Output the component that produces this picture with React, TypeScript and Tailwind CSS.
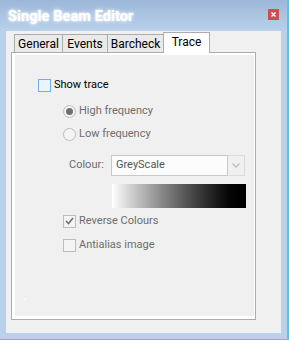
import React from "react";

function Radio({ checked }: { checked?: boolean }) {
  return (
    <div className="w-[13px] h-[13px] rounded-full border border-[#bcbcbc] bg-[#f4f4f4] flex items-center justify-center shrink-0">
      {checked && <div className="w-[7px] h-[7px] rounded-full bg-[#707070]" />}
    </div>
  );
}

function DisabledCheck({ checked }: { checked?: boolean }) {
  return (
    <div className="w-[13px] h-[13px] border border-[#bcbcbc] bg-[#f4f4f4] flex items-center justify-center shrink-0">
      {checked && (
        <svg width="9" height="8" viewBox="0 0 9 8">
          <path d="M1 4 L3.5 6.5 L8 1" stroke="#707070" strokeWidth="1.6" fill="none" />
        </svg>
      )}
    </div>
  );
}

export default function App() {
  const tabs = [
    { label: "General", w: "w-[49px]" },
    { label: "Events", w: "w-[46px]" },
    { label: "Barcheck", w: "w-[57px]" },
  ];
  return (
    <div className="w-[289px] h-[340px] flex flex-col bg-[#b9d1ea] border-r-2 border-b border-[#4fc6ea] overflow-hidden font-['Roboto','Noto_Sans',sans-serif] text-[11px]">
      {/* title bar */}
      <div className="h-[31px] flex items-start justify-between bg-gradient-to-b from-[#9db7d9] to-[#b9d1ea] pl-[8px] pr-[8px]">
        <div
          className="mt-[8px] text-white font-bold text-[14.5px] leading-[18px] tracking-[0.1px]"
          style={{ textShadow: "0 0 4px rgba(255,255,255,0.9), 0 0 2px rgba(255,255,255,0.8)" }}
        >
          Single Beam Editor
        </div>
        <div className="mt-[9px] w-[11px] h-[11px] bg-[#c75050] flex items-center justify-center">
          <svg width="5" height="5" viewBox="0 0 5 5">
            <path d="M0.5 0.5 L4.5 4.5 M4.5 0.5 L0.5 4.5" stroke="#fff" strokeWidth="1.4" />
          </svg>
        </div>
      </div>
      {/* client row */}
      <div className="flex h-[302px]">
        <div className="w-[6px] shrink-0" />
        <div className="w-[275px] bg-[#f0f0f0] pt-[1px] pl-[5px] flex flex-col">
          {/* tab strip */}
          <div className="h-[20px] flex items-end pl-[3px]">
            {tabs.map((t, i) => (
              <div
                key={t.label}
                className={`${t.w} ${i > 0 ? "-ml-px" : ""} h-[18px] border border-b-0 border-[#acacac] bg-[#eaeaea] flex items-center justify-center text-black text-[12px] leading-none`}
              >
                {t.label}
              </div>
            ))}
            <div className="w-[47px] -ml-px h-[21px] -mb-px relative z-10 border border-b-0 border-[#acacac] bg-white flex items-start justify-center pt-[3px] text-black text-[12px] leading-none">
              Trace
            </div>
          </div>
          {/* panel */}
          <div className="w-[245px] h-[268px] border border-[#acacac] bg-white pl-[3px] pr-[1px] pt-[2px] pb-[3px]">
            <div className="w-full h-full bg-[#f0f0f0] flex flex-col">
              <div className="mt-[20px] h-[20px] pl-[23px] flex items-center">
                <div className="w-[13px] h-[13px] border border-[#6eaeee] bg-[#eaf4fe] shrink-0" />
                <span className="ml-[3px] text-black">Show trace</span>
              </div>
              <div className="mt-[6px] h-[20px] pl-[48px] flex items-center text-[#6d6d6d]">
                <Radio checked />
                <span className="ml-[3px]">High frequency</span>
              </div>
              <div className="mt-[3px] h-[20px] pl-[48px] flex items-center text-[#6d6d6d]">
                <Radio />
                <span className="ml-[3px]">Low frequency</span>
              </div>
              <div className="mt-[11px] h-[21px] pl-[54px] flex items-center">
                <span className="w-[42px] text-[#6d6d6d]">Colour:</span>
                <div className="flex h-[21px] w-[134px]">
                  <div className="w-[117px] h-full border border-[#c9c9c9] bg-[#fcfcfc] flex items-center pl-[4px] text-[#555555]">
                    GreyScale
                  </div>
                  <div className="w-[17px] h-full border border-[#dcdcdc] border-l-0 bg-[#f0f0f0] flex items-center justify-center">
                    <svg width="8" height="5" viewBox="0 0 8 5">
                      <path d="M0.5 0.5 L4 4 L7.5 0.5" stroke="#bdbdbd" strokeWidth="1.3" fill="none" />
                    </svg>
                  </div>
                </div>
              </div>
              <div className="mt-[8px] ml-[97px] w-[134px] h-[24px] bg-gradient-to-r from-white to-black" />
              <div className="mt-[3px] h-[20px] pl-[48px] flex items-center text-[#6d6d6d]">
                <DisabledCheck checked />
                <span className="ml-[3px]">Reverse Colours</span>
              </div>
              <div className="mt-[4px] h-[20px] pl-[48px] flex items-center text-[#6d6d6d]">
                <DisabledCheck />
                <span className="ml-[3px]">Antialias image</span>
              </div>
              <div className="mt-[44px] ml-[9px] w-[2px] h-[1px] bg-white" />
            </div>
          </div>
        </div>
        <div className="w-[6px] shrink-0" />
      </div>
    </div>
  );
}
